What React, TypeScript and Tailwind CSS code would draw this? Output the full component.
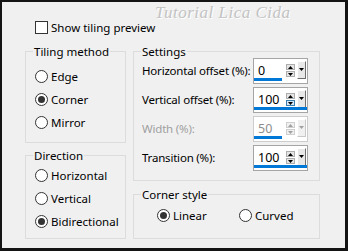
import React from "react";

function Radio({ checked, label, className = "" }: { checked?: boolean; label: string; className?: string }) {
  return (
    <div className={`flex items-center h-[23px] ${className}`}>
      <span className="w-[13px] h-[13px] rounded-full border border-[#333333] bg-white flex items-center justify-center shrink-0">
        {checked && <span className="w-[7px] h-[7px] rounded-full bg-[#333333]" />}
      </span>
      <span className="ml-[3px]">{label}</span>
    </div>
  );
}

function Group({ title, className = "", children }: { title: string; className?: string; children?: React.ReactNode }) {
  return (
    <div className={`relative border border-[#dcdcdc] ${className}`}>
      <span className="absolute left-[7px] top-[-8px] bg-[#f0f0f0] px-[1px] leading-[16px]">{title}</span>
      {children}
    </div>
  );
}

function Up({ color }: { color: string }) {
  return (
    <svg width="5" height="3" viewBox="0 0 5 3">
      <path d="M0 3 L2.5 0 L5 3 Z" fill={color} />
    </svg>
  );
}
function Down({ color }: { color: string }) {
  return (
    <svg width="5" height="3" viewBox="0 0 5 3">
      <path d="M0 0 L5 0 L2.5 3 Z" fill={color} />
    </svg>
  );
}

function NumField({ value, full, disabled, hoverDown }: { value: string; full?: boolean; disabled?: boolean; hoverDown?: boolean }) {
  const arrow = disabled ? "#a0a0a0" : "#000000";
  return (
    <div className={`relative w-[55px] h-[26px] border bg-white flex shrink-0 ${disabled ? "border-[#cccccc]" : "border-[#a5a5a5]"}`}>
      <div className={`flex-1 pl-[4px] pt-[4px] text-[12.5px] leading-[16px] ${disabled ? "text-[#8d8d8d]" : "text-black"}`}>{value}</div>
      <div className="flex flex-col gap-[1px] mt-[5px] mr-[2px]">
        <div className={`w-[9px] h-[6px] border flex items-center justify-center ${disabled ? "border-[#cfcfcf] bg-[#f0f0f0]" : "border-[#adadad] bg-[#e5e5e5]"}`}>
          <Up color={arrow} />
        </div>
        <div
          className={`w-[9px] h-[6px] border flex items-center justify-center ${
            hoverDown ? "border-[#3c7fb1] bg-[#d6e8f7]" : disabled ? "border-[#cfcfcf] bg-[#f0f0f0]" : "border-[#adadad] bg-[#e5e5e5]"
          }`}
        >
          <Down color={arrow} />
        </div>
      </div>
      <div
        className={`w-[9px] h-[18px] mt-[2px] mr-[1px] border-t border-l border-b border-r flex justify-center pt-[6px] ${
          disabled
            ? "bg-[#f0f0f0] border-t-white border-l-white border-r-[#c8c8c8] border-b-[#c8c8c8]"
            : "bg-[#e8e8e8] border-t-white border-l-white border-r-[#6e6e6e] border-b-[#6e6e6e]"
        }`}
      >
        <Down color={arrow} />
      </div>
      <div className={`absolute left-0 bottom-[2px] h-[3px] bg-[#0078d7] ${full ? "w-full" : "w-[28px]"}`} />
    </div>
  );
}

function Row({ label, children, disabled }: { label: string; children: React.ReactNode; disabled?: boolean }) {
  return (
    <div className="flex items-center h-[26px]">
      <div className={`w-[111px] shrink-0 whitespace-nowrap tracking-[-0.2px] ${disabled ? "text-[#a0a0a0]" : "text-black"}`}>{label}</div>
      {children}
    </div>
  );
}

export default function App() {
  return (
    <div className="relative w-[348px] h-[251px] bg-[#f0f0f0] border-l-2 border-t-2 border-r-[3px] border-b-[3px] border-[#141414] pl-[23px] pt-[19px] text-[11.5px] leading-[16px] text-black font-['Noto_Sans',sans-serif]">
      <div className="absolute left-[153px] top-[3px] text-[17px] italic text-[#c3c3c3] font-['Liberation_Serif',serif] [text-shadow:1px_1px_0_#ffffff] tracking-[0.5px]">
        Tutorial Lica Cida
      </div>
      <div className="flex items-center h-[13px] ml-[10px]">
        <span className="w-[13px] h-[13px] border border-[#333333] bg-white shrink-0" />
        <span className="ml-[3px] whitespace-nowrap">Show tiling preview</span>
      </div>
      <div className="flex gap-[7px] mt-[17px]">
        <div className="flex flex-col w-[101px]">
          <Group title="Tiling method" className="h-[92px] pt-[13px] pl-[9px]">
            <Radio label="Edge" />
            <Radio label="Corner" checked />
            <Radio label="Mirror" />
          </Group>
          <Group title="Direction" className="h-[84px] mt-[12px] pt-[8px] pl-[9px]">
            <Radio label="Horizontal" />
            <Radio label="Vertical" />
            <Radio label="Bidirectional" checked />
          </Group>
        </div>
        <div className="flex flex-col w-[187px]">
          <Group title="Settings" className="h-[130px] pt-[6px] pl-[8px]">
            <div className="flex flex-col gap-[3px]">
              <Row label="Horizontal offset (%):">
                <NumField value="0" />
              </Row>
              <Row label="Vertical offset (%):">
                <NumField value="100" full hoverDown />
              </Row>
              <Row label="Width (%):" disabled>
                <NumField value="50" disabled />
              </Row>
              <Row label="Transition (%):">
                <NumField value="100" full />
              </Row>
            </div>
          </Group>
          <Group title="Corner style" className="h-[45px] mt-[13px] pt-[9px] pl-[23px]">
            <div className="flex">
              <Radio label="Linear" checked className="w-[82px]" />
              <Radio label="Curved" />
            </div>
          </Group>
        </div>
      </div>
    </div>
  );
}
